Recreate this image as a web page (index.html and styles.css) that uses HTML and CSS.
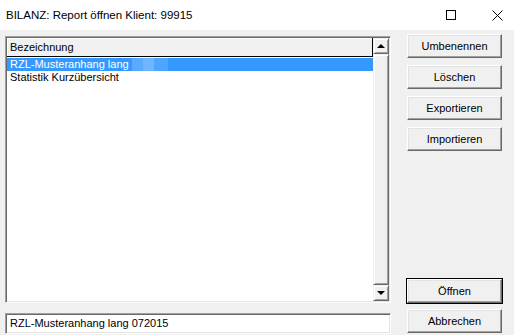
FILE: index.html
```html
<!DOCTYPE html>
<html lang="de">
<head>
  <meta charset="UTF-8">
  <title>BILANZ: Report öffnen</title>
  <link rel="stylesheet" href="styles.css">
</head>
<body>
  <div class="window">
    <div class="titlebar">
      <span class="title">BILANZ: Report öffnen Klient: 99915</span>
      <span class="ctl max"><span class="box"></span></span>
      <span class="ctl close">
        <svg width="11" height="11" viewBox="0 0 11 11"><path d="M0.5 0.5 L10.5 10.5 M10.5 0.5 L0.5 10.5" stroke="#000" stroke-width="1" fill="none"/></svg>
      </span>
    </div>

    <div class="main">
      <div class="left">
        <div class="listbox">
          <div class="list">
            <div class="header">Bezeichnung</div>
            <div class="item selected">RZL-Musteranhang lang <span class="blur"></span></div>
            <div class="item">Statistik Kurzübersicht</div>
          </div>
          <div class="scrollbar">
            <div class="sbtn"><span class="arrow up"></span></div>
            <div class="thumb"></div>
            <div class="sbtn"><span class="arrow down"></span></div>
          </div>
        </div>
        <div class="field">RZL-Musteranhang lang 072015</div>
      </div>

      <div class="buttons">
        <button class="btn">Umbenennen</button>
        <button class="btn">Löschen</button>
        <button class="btn">Exportieren</button>
        <button class="btn">Importieren</button>
        <div class="spacer"></div>
        <button class="btn default">Öffnen</button>
        <button class="btn">Abbrechen</button>
      </div>
    </div>
  </div>
</body>
</html>
```

FILE: styles.css
```css
* {
  margin: 0;
  padding: 0;
  box-sizing: border-box;
}

body {
  font-family: "Liberation Sans", Arial, sans-serif;
  font-size: 11px;
  color: #000;
  background: #f0f0f0;
  width: 514px;
  height: 335px;
  overflow: hidden;
}

.titlebar {
  height: 30px;
  background: #fff;
  display: flex;
  align-items: center;
  padding-left: 6px;
}

.title {
  flex: 1;
  font-size: 11.5px;
  color: #000;
}

.ctl {
  height: 30px;
  display: flex;
  align-items: center;
  justify-content: center;
}

.max {
  width: 46px;
  margin-right: 6px;
}

.max .box {
  width: 10px;
  height: 10px;
  border: 1px solid #000;
}

.close {
  width: 34px;
}

.main {
  display: flex;
  padding: 4px 0 0 5px;
}

.left {
  width: 386px;
  margin-top: 2px;
  display: flex;
  flex-direction: column;
}

/* sunken 3D frame */
.listbox,
.field {
  border: 1px solid;
  border-color: #a0a0a0 #fff #fff #a0a0a0;
  box-shadow: inset 1px 1px #696969, inset -1px -1px #e3e3e3;
}

.listbox {
  height: 267px;
  background: #fff;
  display: flex;
  padding: 1px;
}

.list {
  flex: 1;
}

.header {
  height: 19px;
  background: #f0f0f0;
  border-right: 1px solid #000;
  border-bottom: 1px solid #000;
  box-shadow: inset 1px 1px #fff;
  padding: 3px 0 0 3px;
  margin-bottom: 1px;
}

.item {
  height: 13px;
  line-height: 13px;
  padding-left: 3px;
  white-space: nowrap;
}

.selected {
  background: #3399ff;
  color: #fff;
}

.blur {
  display: inline-block;
  width: 36px;
  height: 13px;
  vertical-align: top;
  background: linear-gradient(90deg, #5aabff 0 30%, #6fb6ff 30% 60%, #4ea5ff 60% 100%);
}

.scrollbar {
  width: 16px;
  display: flex;
  flex-direction: column;
  background: #f0f0f0;
}

.sbtn,
.thumb {
  border: 1px solid;
  border-color: #f0f0f0 #696969 #696969 #f0f0f0;
  box-shadow: inset 1px 1px #fff, inset -1px -1px #a0a0a0;
  background: #f0f0f0;
}

.sbtn {
  height: 16px;
  display: flex;
  align-items: center;
  justify-content: center;
}

.thumb {
  flex: 1;
}

.arrow {
  width: 0;
  height: 0;
  border-left: 4px solid transparent;
  border-right: 4px solid transparent;
}

.arrow.up {
  border-bottom: 4px solid #000;
}

.arrow.down {
  border-top: 4px solid #000;
}

.field {
  margin-top: 10px;
  height: 21px;
  background: #fff;
  padding: 3px 0 0 4px;
  font-size: 11px;
}

.buttons {
  width: 95px;
  margin-left: 16px;
  height: 299px;
  display: flex;
  flex-direction: column;
  gap: 7px;
}

.spacer {
  flex: 1;
}

.btn {
  height: 24px;
  font-family: "Liberation Sans", Arial, sans-serif;
  font-size: 11px;
  color: #000;
  background: #f0f0f0;
  border: 1px solid;
  border-color: #fff #696969 #696969 #fff;
  box-shadow: inset -1px -1px #a0a0a0, inset 1px 1px #e3e3e3;
}

.btn.default {
  margin-bottom: -1px;
  outline: 1px solid #000;
  outline-offset: 0;
}
```
